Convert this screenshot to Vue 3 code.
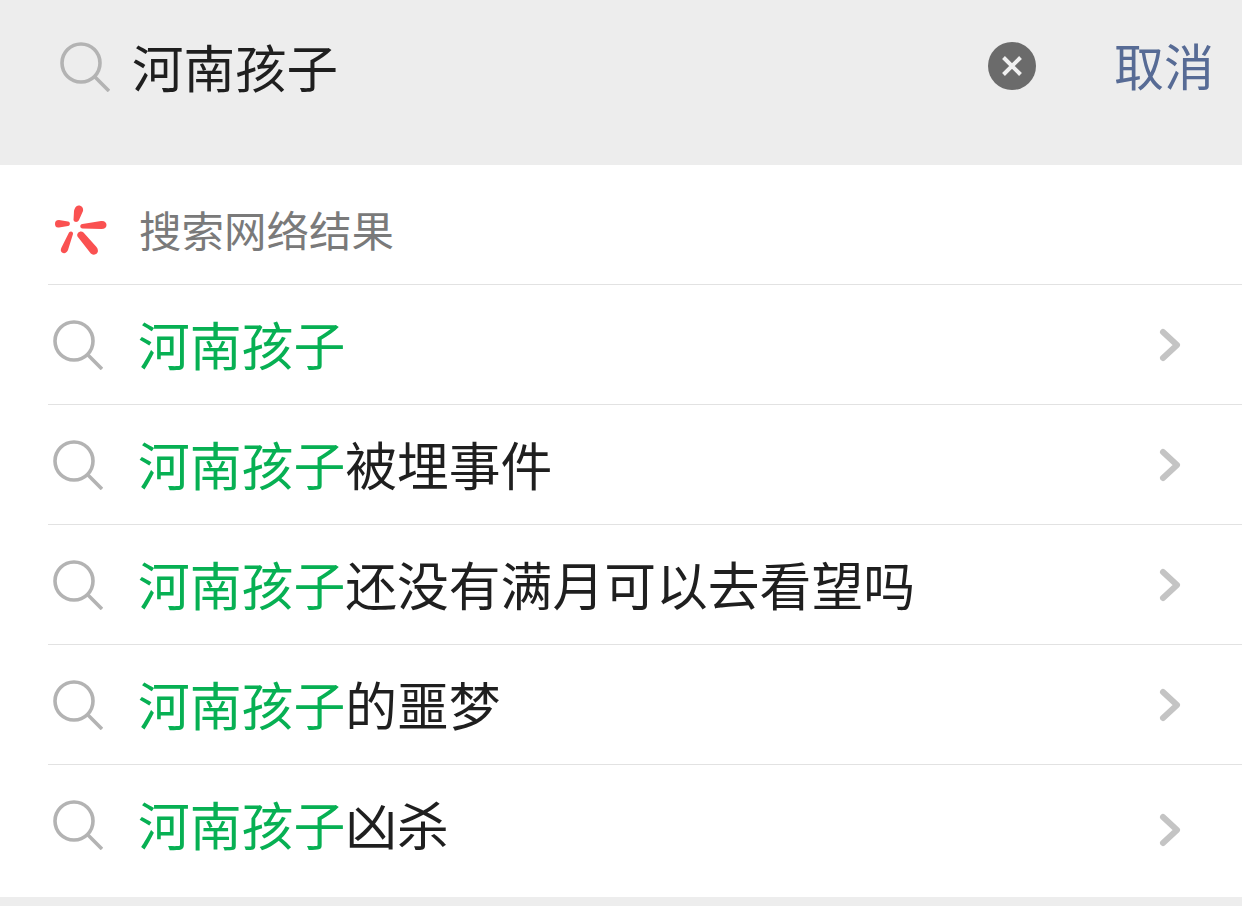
<template>
  <div class="page">
    <header class="search-bar">
      <svg class="search-icon top-icon" viewBox="0 0 50 50"><circle cx="21" cy="21" r="19" /><path d="M34.500 34.500 L49 49" /></svg>
      <span class="query">河南孩子</span>
      <span class="clear">
        <svg viewBox="0 0 48 48"><path d="M15.500 15.500 L32.500 32.500 M32.500 15.500 L15.500 32.500" /></svg>
      </span>
      <span class="cancel">取消</span>
    </header>

    <section class="results">
      <div class="row web-row">
        <svg class="logo" viewBox="0 0 52 50">
          <path d="M23.500 0.500 C27 0.500 28.500 3 28 6 L24 15 C23 17.500 19 17.500 18.500 15 L19 6 C19.500 3 21 0.500 23.500 0.500 Z" />
          <path d="M4 15 L13 16.500 C15.500 17 15.500 20.500 13 21 L4 22.500 C1 23 0 21 0 18.800 C0 16.500 1 15 4 15 Z" />
          <path d="M27.500 19 L46 16 C49.500 15.500 51.500 17.500 51.500 20 C51.500 22.500 49.500 24 46.500 24 L27.500 23.500 C24.500 23 24.500 19.500 27.500 19 Z" />
          <path d="M14 27.500 C15.500 25.500 18.500 26.500 18 29 L13 45 C12 48 9 49 7 47.500 C5.500 46.500 5.500 44.500 6.500 42.500 Z" />
          <path d="M23 28 C24.500 26 27 26 28.500 27.500 L41.500 42 C43.500 44.500 43.500 47.500 41 49 C38.500 50.500 36.500 49.500 35 47.500 L22.500 31.500 C22 30.500 22 29 23 28 Z" />
        </svg>
        <span class="web-label">搜索网络结果</span>
      </div>
      <div v-for="item in items" :key="item" class="row result-row">
        <svg class="search-icon" viewBox="0 0 50 50"><circle cx="21" cy="21" r="19" /><path d="M34.500 34.500 L49 49" /></svg>
        <span class="result-text"><em>河南孩子</em>{{ item }}</span>
        <svg class="chevron" viewBox="0 0 24 36"><path d="M5 5 L19 18 L5 31" /></svg>
      </div>
    </section>
  </div>
</template>

<script setup>
const items = ['', '被埋事件', '还没有满月可以去看望吗', '的噩梦', '凶杀']
</script>

<style>
html, body { margin: 0; background: #ededed; }
</style>

<style scoped>
.page {
  width: 1242px;
  height: 906px;
  background: #ededed;
  font-family: "Noto Sans CJK SC", "Noto Sans", sans-serif;
  overflow: hidden;
}
.search-bar {
  height: 165px;
  box-sizing: border-box;
  display: flex;
  align-items: flex-start;
  padding: 0 28px 0 60px;
}
.search-icon {
  width: 50px;
  height: 50px;
  flex: none;
  fill: none;
  stroke: #b3b3b3;
  stroke-width: 3.600;
}
.top-icon { margin-top: 42px; }
.query {
  margin-left: 22px;
  margin-top: 28px;
  font-size: 51.500px;
  line-height: 76px;
  color: #1f1f1f;
  flex: 1;
}
.clear {
  width: 48px;
  height: 48px;
  margin-top: 41.500px;
  margin-right: 0.500px;
  border-radius: 50%;
  background: #6b6b6b;
  flex: none;
}
.clear svg {
  display: block;
  fill: none;
  stroke: #f0f0f0;
  stroke-width: 4;
}
.cancel {
  margin-left: 78px;
  margin-top: 26px;
  font-size: 50px;
  line-height: 76px;
  color: #576b95;
}
.results {
  background: #fff;
  height: 732px;
  padding-left: 48px;
}
.row {
  display: flex;
  align-items: center;
  box-sizing: border-box;
}
.web-row { height: 119px; padding-left: 7px; padding-top: 8px; }
.logo { width: 52px; height: 50px; margin-top: 3px; fill: #fa5151; flex: none; }
.web-label {
  margin-left: 32px;
  font-size: 42.500px;
  color: #7a7a7a;
}
.result-row {
  height: 120px;
  border-top: 1px solid #e2e2e2;
  padding-left: 5px;
}
.result-row:last-child { height: 133px; padding-bottom: 13px; }
.result-text {
  margin-left: 35px;
  margin-top: -2px;
  flex: 1;
  font-size: 51.800px;
  line-height: 76px;
  color: #1f1f1f;
}
.result-text em { font-style: normal; color: #07b053; }
.chevron {
  width: 24px;
  height: 36px;
  margin-right: 60px;
  fill: none;
  stroke: #c4c4c4;
  stroke-width: 6;
  stroke-linecap: round;
  stroke-linejoin: round;
}
.result-row:last-child .chevron { margin-top: 10px; }
</style>
